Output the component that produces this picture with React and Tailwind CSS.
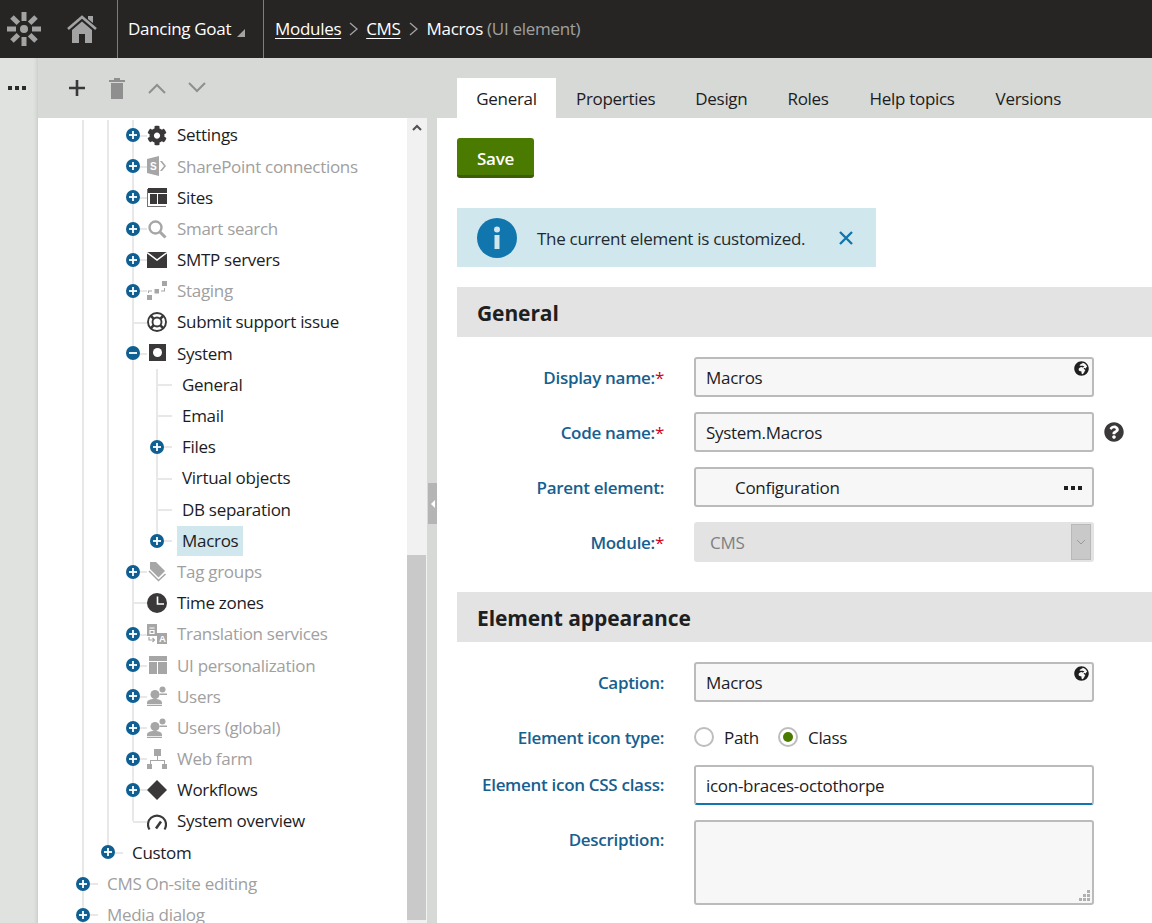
import { FaCog, FaGlobeAfrica, FaQuestionCircle } from "react-icons/fa";

const Logo = () => (
  <svg width="36" height="36" viewBox="-18 -18 36 36" fill="none" stroke="#a3a3a3">
    {[0, 45, 90, 135, 180, 225, 270, 315].map((a) => (
      <line key={a} x1="0" y1="-8" x2="0" y2="-17" strokeWidth="5" transform={`rotate(${a})`} />
    ))}
    <circle r="4" fill="#a3a3a3" stroke="none" />
  </svg>
);

const Home = () => (
  <svg width="30" height="28" viewBox="0 0 30 28">
    <path d="M1 14 15 2l14 12" fill="none" stroke="#a3a3a3" strokeWidth="2.6" />
    <path d="M21 1h5v7l-5-4z" fill="#a3a3a3" />
    <path d="M5 15 15 6.500l10 8.500v13h-7v-9h-6v9H5z" fill="#a3a3a3" />
  </svg>
);

const icons = {
  settings: <FaCog size={21} />,
  sharepoint: (
    <svg width="20" height="20" viewBox="0 0 20 20" fill="currentColor">
      <path d="M0 3 12 0v20L0 17z" />
      <text x="3" y="14" fontSize="10" fontWeight="700" fill="#fff" fontFamily="Liberation Sans, sans-serif">S</text>
      <path d="m13 5 2 0 4 5-4 5h-2l4-5z" />
    </svg>
  ),
  sites: (
    <svg width="20" height="20" viewBox="0 0 20 20" fill="currentColor">
      <path d="M1 1h19v5H1zM3 7h7v10H3zM11 7h9v10h-9z" />
      <path d="M0 2h1v17h18v1H0z" opacity=".7" />
    </svg>
  ),
  search: (
    <svg width="20" height="20" viewBox="0 0 20 20" fill="none" stroke="currentColor">
      <circle cx="8.500" cy="8.500" r="6" strokeWidth="2.400" />
      <path d="m13 13 5.500 5.500" strokeWidth="3" />
    </svg>
  ),
  mail: (
    <svg width="20" height="20" viewBox="0 0 20 20" fill="currentColor">
      <path d="M0 2h20v16H0z" />
      <path d="M0 2.500 10 10l10-7.500" fill="none" stroke="#fff" strokeWidth="1.500" />
    </svg>
  ),
  staging: (
    <svg width="20" height="20" viewBox="0 0 20 20" fill="currentColor">
      <path d="M0 14h5v5H0zM7.500 8H12v4.500H7.500zM15 0h5v5h-5z" />
      <path d="M1 12V9.500h4v1H2V12zM14 10.500h4V7h-1v2.500h-3z" />
    </svg>
  ),
  support: (
    <svg width="20" height="20" viewBox="0 0 20 20" fill="none" stroke="currentColor" strokeWidth="1.900">
      <circle cx="10" cy="10" r="9" />
      <circle cx="10" cy="10" r="4.500" />
      <path d="m3.500 3.500 3.300 3.300M16.500 3.500l-3.300 3.300M3.500 16.500l3.300-3.300M16.500 16.500l-3.300-3.300" strokeWidth="2.600" />
    </svg>
  ),
  system: (
    <svg width="20" height="20" viewBox="0 0 20 20" fill="currentColor">
      <path d="M2 1h17v17H2z" />
      <circle cx="10.500" cy="9.500" r="4.500" fill="#fff" />
    </svg>
  ),
  tag: (
    <svg width="20" height="20" viewBox="0 0 20 20" fill="currentColor">
      <path d="M3 0h6l9 9-6.500 6.500L3 7z" />
      <path d="m2 9 9.500 9.500L18.500 12" fill="none" stroke="currentColor" strokeWidth="1.500" />
    </svg>
  ),
  clock: (
    <svg width="20" height="20" viewBox="0 0 20 20">
      <circle cx="10" cy="10" r="10" fill="currentColor" />
      <path d="M10.500 3.500v7.500H17" fill="none" stroke="#fff" strokeWidth="1.600" />
    </svg>
  ),
  translation: (
    <svg width="20" height="20" viewBox="0 0 20 20" fill="currentColor">
      <path d="M0 0h10v12H0z" />
      <path d="M2.500 4h5M3 6.500h4v3H3z" fill="none" stroke="#fff" strokeWidth="1.200" />
      <path d="M10 9h10v11H10z" />
      <text x="12" y="18" fontSize="9.500" fontWeight="700" fill="#fff" fontFamily="Liberation Sans, sans-serif">A</text>
      <path d="M2 13v3h5M5.500 14l2 2-2 2" fill="none" stroke="currentColor" strokeWidth="1.200" />
    </svg>
  ),
  layout: (
    <svg width="20" height="20" viewBox="0 0 20 20" fill="currentColor">
      <path d="M2 1h18v5H2zM2 7h8v12H2zM11 7h9v12h-9z" />
    </svg>
  ),
  users: (
    <svg width="20" height="20" viewBox="0 0 20 20" fill="currentColor">
      <circle cx="8" cy="8.500" r="4.500" />
      <circle cx="15.500" cy="3.500" r="3" />
      <path d="M12.500 7.500H20V9h-7.500zM0 17c0-3 3-4 7.500-4s7.500 1 7.500 4v1H0zM0 18.800h15v1.200H0z" />
    </svg>
  ),
  webfarm: (
    <svg width="20" height="20" viewBox="0 0 20 20" fill="currentColor">
      <path d="M7 0h7v7H7zM10 7h1v4h7v4h-1v-3H4v3H3v-4h7zM0 15h5v5H0zM15 15h5v5h-5z" />
    </svg>
  ),
  workflow: (
    <svg width="20" height="20" viewBox="0 0 20 20" fill="currentColor">
      <path d="M10 0 20 10 10 20 0 10z" />
    </svg>
  ),
  gauge: (
    <svg width="20" height="20" viewBox="0 0 20 20" fill="none" stroke="currentColor">
      <path d="M2.500 18.500A9 9 0 1 1 17.500 18.500" strokeWidth="2.200" />
      <path d="m9 17.500 5-7" strokeWidth="2.600" />
    </svg>
  ),
};

const Row = ({ label, state, icon, muted, selected, spacer = "w-[18px]" }) => (
  <div className="relative flex h-[31.2px] items-center">
    {/* horizontal tree stub */}
    <span className="absolute left-[7px] top-[15px] h-[2px] w-[15px] bg-[#e8e8e8]" />
    <span className="relative z-10 flex w-[14px] shrink-0 justify-center">
      {state && (
        <span className="flex h-[14px] w-[14px] items-center justify-center rounded-full bg-[#0f5f92]">
          <svg width="8" height="8" viewBox="0 0 8 8" stroke="#fff" strokeWidth="1.800">
            <path d="M0 4h8" />
            {state === "plus" && <path d="M4 0v8" />}
          </svg>
        </span>
      )}
    </span>
    {icon ? (
      <span className={`relative z-10 ml-[7.5px] mr-[10px] flex w-[20px] justify-center bg-white ${muted ? "text-[#a6a6a6]" : "text-[#3a3838]"}`}>
        {icons[icon]}
      </span>
    ) : (
      <span className={selected ? "w-[13px]" : spacer} />
    )}
    <span
      className={`relative z-10 whitespace-nowrap ${muted ? "text-[#a0a0a0]" : "text-[#1c1c24]"} ${selected ? "flex h-[30px] items-center bg-[#d0e7ed] px-[5px]" : "bg-white"}`}
    >
      {label}
    </span>
  </div>
);

// vertical guide that stops halfway the last row
const Branch = ({ children, className, end = "bottom-[16px]" }) => (
  <div className={`relative ${className}`}>
    <span className={`absolute left-[6px] top-0 w-[2px] bg-[#e8e8e8] ${end}`} />
    {children}
  </div>
);

const Field = ({ label, required, children, className = "h-[40px] items-center", labelPad = "pt-[2px]" }) => (
  <div className={`flex gap-[30px] ${className}`}>
    <div className={`w-[207px] shrink-0 text-right font-semibold text-[#16608f] ${labelPad}`}>
      {label}
      {required && <span className="font-normal text-[#d0021b]">*</span>}
    </div>
    {children}
  </div>
);

const boxClass = "relative flex h-[40px] w-[400px] items-center rounded-[3px] border-2 border-[#bbbbbb] bg-[#f7f7f7] px-[10px] pt-[2px] text-[#1c1c24]";

const Globe = () => (
  <span className="absolute right-[3px] top-[2px] text-[#1f1f1f]">
    <FaGlobeAfrica size={15} />
  </span>
);

const Section = ({ children }) => (
  <div className="flex h-[50px] items-center bg-[#e3e3e3] pl-5 pt-[4px] text-[21px] font-bold tracking-[-0.1px] text-[#1f1f1f]">
    {children}
  </div>
);

const Radio = ({ label, checked }) => (
  <div className="flex items-center gap-[10px]">
    <span className="flex h-[20px] w-[20px] items-center justify-center rounded-full border-2 border-[#bdbdbd] bg-white">
      {checked && <span className="h-[10px] w-[10px] rounded-full bg-[#4b7a00]" />}
    </span>
    <span className="mt-[2px] text-[#1c1c24]">{label}</span>
  </div>
);

const Chevron = () => (
  <svg width="9" height="14" viewBox="0 0 9 14" fill="none" stroke="#a3a3a3" strokeWidth="1.300"><path d="m1 1 7 6-7 6" /></svg>
);

const Dots = ({ className = "bg-[#2b2b2b]" }) => (
  <span className="flex h-[4px] gap-[3px]">
    <span className={`h-[4px] w-[4px] ${className}`} />
    <span className={`h-[4px] w-[4px] ${className}`} />
    <span className={`h-[4px] w-[4px] ${className}`} />
  </span>
);

const App = () => {
  return (
    <div className="flex h-[923px] flex-col overflow-hidden bg-white font-['Open_Sans',sans-serif] text-[17px] tracking-[-0.3px]">
      {/* -------------------top bar-------------------- */}
      <header className="flex h-[58px] shrink-0 items-center bg-[#262524] text-white">
        <div className="flex w-[117px] items-center">
          <span className="ml-[6px]"><Logo /></span>
          <span className="ml-[25px]"><Home /></span>
        </div>
        <div className="flex h-full w-[147px] items-center gap-[6px] border-x border-[#7d7d7d] pl-[10px]">
          <span className="whitespace-nowrap">Dancing Goat</span>
          <span className="mt-[7px] h-0 w-0 border-b-[8px] border-l-[8px] border-b-[#a3a3a3] border-l-transparent" />
        </div>
        <nav className="ml-[11px] flex items-center gap-[8px] whitespace-nowrap">
          <span className="underline underline-offset-[3px]">Modules</span>
          <Chevron />
          <span className="underline underline-offset-[3px]">CMS</span>
          <Chevron />
          <span className="ml-[1px]">
            Macros <span className="text-[#a0a0a0]">(UI element)</span>
          </span>
        </nav>
      </header>

      <div className="flex min-h-0 flex-1">
        {/* ---side strip--- */}
        <div className="flex w-[38px] shrink-0 justify-center bg-[#dfe2df] pt-[28px] pr-[4px] shadow-[inset_-4px_0_4px_-3px_rgba(0,0,0,0.12)]">
          <Dots />
        </div>

        {/* -------------------tree panel-------------------- */}
        <aside className="flex w-[399px] shrink-0 flex-col">
          <div className="flex h-[60px] shrink-0 items-center gap-[22px] bg-[#d6d9d6] pl-[30px]">
            <svg width="18" height="18" viewBox="0 0 18 18" stroke="#3a3838" strokeWidth="2.600"><path d="M1 9h16M9 1v16" /></svg>
            <svg width="18" height="22" viewBox="0 0 18 22" fill="#8f8f8f"><path d="M1 3h16v2H1zM6 1h6v2H6zM3 6h12v16H3z" /></svg>
            <svg width="18" height="12" viewBox="0 0 18 12" fill="none" stroke="#8f8f8f" strokeWidth="2"><path d="m1 11 8-8 8 8" /></svg>
            <svg width="18" height="12" viewBox="0 0 18 12" fill="none" stroke="#8f8f8f" strokeWidth="2"><path d="m1 1 8 8 8-8" /></svg>
          </div>
          <div className="flex min-h-0 flex-1">
            <div className="w-[369px] shrink-0 overflow-hidden pl-[38px] pt-[1.5px]">
              <Branch end="-bottom-[40px]">
                <Branch className="ml-[25px]">
                  <Branch className="ml-[24.5px]">
                    <Row state="plus" icon="settings" label="Settings" />
                    <Row state="plus" icon="sharepoint" label="SharePoint connections" muted />
                    <Row state="plus" icon="sites" label="Sites" />
                    <Row state="plus" icon="search" label="Smart search" muted />
                    <Row state="plus" icon="mail" label="SMTP servers" />
                    <Row state="plus" icon="staging" label="Staging" muted />
                    <Row icon="support" label="Submit support issue" />
                    <Row state="minus" icon="system" label="System" />
                    <Branch className="ml-[24.5px]">
                      <Row label="General" />
                      <Row label="Email" />
                      <Row state="plus" label="Files" />
                      <Row label="Virtual objects" />
                      <Row label="DB separation" />
                      <Row state="plus" label="Macros" selected />
                    </Branch>
                    <Row state="plus" icon="tag" label="Tag groups" muted />
                    <Row icon="clock" label="Time zones" />
                    <Row state="plus" icon="translation" label="Translation services" muted />
                    <Row state="plus" icon="layout" label="UI personalization" muted />
                    <Row state="plus" icon="users" label="Users" muted />
                    <Row state="plus" icon="users" label="Users (global)" muted />
                    <Row state="plus" icon="webfarm" label="Web farm" muted />
                    <Row state="plus" icon="workflow" label="Workflows" />
                    <Row icon="gauge" label="System overview" />
                  </Branch>
                  <Row state="plus" label="Custom" spacer="w-[17px]" />
                </Branch>
                <Row state="plus" label="CMS On-site editing" muted spacer="w-[17px]" />
                <Row state="plus" label="Media dialog" muted spacer="w-[17px]" />
              </Branch>
            </div>

            {/* ---scrollbar--- */}
            <div className="flex w-[20px] shrink-0 flex-col bg-[#f1f1f1]">
              <div className="flex h-[437px] justify-center pt-[6px]">
                <svg width="10" height="7" viewBox="0 0 10 7" fill="none" stroke="#505050" strokeWidth="2"><path d="m1 6 4-4 4 4" /></svg>
              </div>
              <div className="mb-[3px] mr-[1px] flex-1 bg-[#c9c9c9]" />
            </div>

            {/* ---splitter--- */}
            <div className="relative w-[10px] shrink-0 bg-[#d6d9d6]">
              <div className="absolute left-[1px] top-[365px] flex h-[41px] w-[9px] items-center justify-center bg-[#b5b5b5]">
                <span className="h-0 w-0 border-y-[4px] border-r-[4px] border-y-transparent border-r-white" />
              </div>
            </div>
          </div>
        </aside>

        {/* -------------------main-------------------- */}
        <main className="min-w-0 flex-1">
          <div className="flex h-[60px] items-end bg-[#d6d9d6] pl-5 text-[#1c1c24]">
            <span className="flex h-[40px] w-[99px] items-center justify-center bg-white pt-[2px]">General</span>
            <span className="flex h-[40px] items-center px-5 pt-[2px]">Properties</span>
            <span className="flex h-[40px] items-center px-5 pt-[2px]">Design</span>
            <span className="flex h-[40px] items-center px-5 pt-[2px]">Roles</span>
            <span className="flex h-[40px] w-[127px] items-center justify-center pt-[2px]">Help topics</span>
            <span className="flex h-[40px] items-center px-5 pt-[2px]">Versions</span>
          </div>

          <div className="pl-5 pt-5">
            <button className="flex h-[40px] w-[77px] items-center justify-center rounded-[3px] border-b-[3px] border-[#3a5e00] bg-[#4b7a00] pt-[4px] font-semibold text-white">
              Save
            </button>

            <div className="mt-[30px] flex h-[59px] w-[419px] items-center bg-[#d0e7ed] pl-5 text-[#1f2a30]">
              <svg width="40" height="40" viewBox="0 0 40 40" className="shrink-0">
                <circle cx="20" cy="20" r="20" fill="#1175ae" />
                <circle cx="20" cy="11.500" r="3" fill="#d0e7ed" />
                <path d="M17.500 17h5v14h-5z" fill="#d0e7ed" />
              </svg>
              <span className="ml-5 mt-[3px] whitespace-nowrap">The current element is customized.</span>
              <svg width="14" height="14" viewBox="0 0 14 14" stroke="#1175ae" strokeWidth="2.400" className="ml-auto mr-[23px]"><path d="m1 1 12 12M13 1 1 13" /></svg>
            </div>

            <div className="mt-5">
              <Section>General</Section>
              <div className="flex flex-col gap-[15px] pt-5">
                <Field label="Display name:" required>
                  <div className={boxClass}>Macros<Globe /></div>
                </Field>
                <Field label="Code name:" required>
                  <div className={boxClass}>System.Macros</div>
                  <span className="-ml-5 text-[#3a3838]"><FaQuestionCircle size={20} /></span>
                </Field>
                <Field label="Parent element:">
                  <div className={`${boxClass} justify-between pl-[39px]`}>
                    <span>Configuration</span>
                    <Dots className="bg-[#1f1f1f]" />
                  </div>
                </Field>
                <Field label="Module:" required>
                  <div className="flex h-[40px] w-[400px] items-center justify-between rounded-[3px] bg-[#e3e3e3] pl-[16px] pr-[3px] text-[#808080]">
                    <span className="mt-[2px]">CMS</span>
                    <span className="flex h-[36px] w-[20px] items-center justify-center border border-[#b9b9b9] bg-[#c9c9c9]">
                      <svg width="10" height="6" viewBox="0 0 10 6" fill="none" stroke="#9a9a9a"><path d="m1 1 4 4 4-4" /></svg>
                    </span>
                  </div>
                </Field>
              </div>
            </div>

            <div className="mt-[30px]">
              <Section>Element appearance</Section>
              <div className="flex flex-col pt-5">
                <Field label="Caption:">
                  <div className={boxClass}>Macros<Globe /></div>
                </Field>
                <Field label="Element icon type:" className="mt-[15px] h-[40px] items-center">
                  <div className="flex gap-[19px]">
                    <Radio label="Path" />
                    <Radio label="Class" checked />
                  </div>
                </Field>
                <Field label="Element icon CSS class:" className="mt-[8px] h-[40px] items-center" labelPad="pt-0">
                  <div className={`${boxClass} border-b-[#1175ae] bg-white pt-0`}>icon-braces-octothorpe</div>
                </Field>
                <Field label="Description:" className="mt-[15px] h-[85px] items-start" labelPad="pt-[7px]">
                  <div className="relative h-[85px] w-[400px] rounded-[3px] border-2 border-[#bbbbbb] bg-[#f7f7f7]">
                    <svg width="11" height="11" viewBox="0 0 11 11" fill="#b0b0b0" className="absolute bottom-[2px] right-[2px]">
                      <path d="M8 0h3v3H8zM4 4h3v3H4zM8 4h3v3H8zM0 8h3v3H0zM4 8h3v3H4zM8 8h3v3H8z" />
                    </svg>
                  </div>
                </Field>
              </div>
            </div>
          </div>
        </main>
      </div>
    </div>
  );
};

export default App;
